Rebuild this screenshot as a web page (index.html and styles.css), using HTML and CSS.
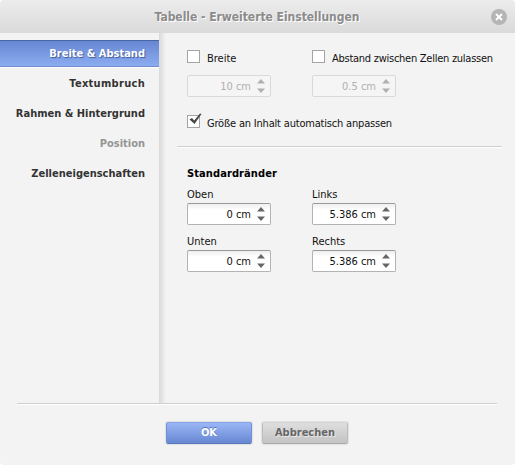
FILE: index.html
```
<!DOCTYPE html>
<html lang="de">
<head>
<meta charset="utf-8">
<title>Tabelle - Erweiterte Einstellungen</title>
<link rel="stylesheet" href="styles.css">
</head>
<body>
<div class="dialog">
  <header class="titlebar">
    <h1>Tabelle - Erweiterte Einstellungen</h1>
    <svg class="close" viewBox="0 0 16 16"><circle cx="8" cy="8" r="8" fill="#b5b5b5"/><path d="M5 5l6 6M11 5l-6 6" stroke="#fff" stroke-width="2"/></svg>
  </header>
  <main class="main">
    <nav class="tabs">
      <a class="tab active">Breite &amp; Abstand</a>
      <a class="tab textwrap">Textumbruch</a>
      <a class="tab">Rahmen &amp; Hintergrund</a>
      <a class="tab disabled">Position</a>
      <a class="tab">Zelleneigenschaften</a>
    </nav>
    <section class="panel">
      <div class="grid options">
        <label class="check"><span class="box"></span><span>Breite</span></label>
        <label class="check"><span class="box"></span><span class="t-spacing">Abstand zwischen Zellen zulassen</span></label>
        <div class="spinner off"><span>10 cm</span><svg viewBox="0 0 8 14"><path d="M0 4.5L4 0l4 4.5zM0 9.5h8L4 14z"/></svg></div>
        <div class="spinner off"><span>0.5 cm</span><svg viewBox="0 0 8 14"><path d="M0 4.5L4 0l4 4.5zM0 9.5h8L4 14z"/></svg></div>
      </div>
      <label class="check auto"><span class="box"><svg class="tick" viewBox="0 0 14 14"><path d="M1.500 6.500l2.500-1.500 2.200 2.500L12 0.500l1.500 0.500L6.500 11z" fill="#484848"/></svg></span><span class="t-auto">Größe an Inhalt automatisch anpassen</span></label>
      <hr class="rule">
      <h2>Standardränder</h2>
      <div class="grid margins">
        <div class="field"><label>Oben</label><div class="spinner"><span>0 cm</span><svg viewBox="0 0 8 14"><path d="M0 4.5L4 0l4 4.5zM0 9.5h8L4 14z"/></svg></div></div>
        <div class="field"><label>Links</label><div class="spinner"><span>5.386 cm</span><svg viewBox="0 0 8 14"><path d="M0 4.5L4 0l4 4.5zM0 9.5h8L4 14z"/></svg></div></div>
        <div class="field"><label>Unten</label><div class="spinner"><span>0 cm</span><svg viewBox="0 0 8 14"><path d="M0 4.5L4 0l4 4.5zM0 9.5h8L4 14z"/></svg></div></div>
        <div class="field"><label>Rechts</label><div class="spinner"><span>5.386 cm</span><svg viewBox="0 0 8 14"><path d="M0 4.5L4 0l4 4.5zM0 9.5h8L4 14z"/></svg></div></div>
      </div>
    </section>
  </main>
  <footer class="footer">
    <button class="btn primary">OK</button>
    <button class="btn">Abbrechen</button>
  </footer>
</div>
</body>
</html>
```

FILE: styles.css
```
* { box-sizing: border-box; }
body { margin: 0; background: #fff; font: 11px/13px "DejaVu Sans Condensed", "DejaVu Sans", sans-serif; color: #111; }
.dialog { width: 515px; height: 465px; display: flex; flex-direction: column; background: #f3f3f3; border-radius: 4px; overflow: hidden; }
.titlebar { height: 33px; flex: none; display: flex; align-items: center; justify-content: flex-end; padding-right: 8px; background: linear-gradient(#ececec, #dadada); }
h1 { margin: 0; flex: 1; padding-left: 23px; text-align: center; font-size: 12px; line-height: 16px; letter-spacing: -0.03px; color: #8b8b8b; text-shadow: 1px 1px 0 #fff; white-space: nowrap; }
.close { width: 16px; height: 16px; }
.main { flex: none; height: 370px; display: flex; }
.tabs { width: 159px; padding-top: 7px; display: flex; flex-direction: column; gap: 3px; }
.tab { height: 27px; padding: 1px 14px 0 0; line-height: 26px; text-align: right; font-weight: bold; color: #333; white-space: nowrap; }
.tab.active { color: #fff; background: linear-gradient(#6686d2, #8cacf1); border-top: 1px solid #4866a5; border-bottom: 1px solid #6e8ccc; box-shadow: 0 1px #fff; text-shadow: 1px 1px 1px #405a9a; padding-top: 0; }
.tab.disabled { color: #959595; }
.tab.textwrap { letter-spacing: 0.3px; }
.panel { flex: 1; padding: 17px 13px 0 28px; background: linear-gradient(90deg, #d9d9d9, #f3f3f3) no-repeat 0 0 / 7px 100%; }
.grid { display: grid; grid-template-columns: 84px 184px; column-gap: 41px; }
.options { row-gap: 12px; }
.check { display: flex; height: 13px; gap: 7px; align-items: center; white-space: nowrap; }
.check > span:last-child { padding-top: 3px; }
.t-spacing { letter-spacing: -0.26px; }
.t-auto { letter-spacing: -0.19px; }
.box { width: 13px; height: 13px; flex: none; border: 1px solid #a4a4a4; background: #fff; position: relative; }
.tick { position: absolute; left: 0; top: -3px; width: 14px; height: 14px; }
.spinner { width: 84px; height: 22px; display: flex; align-items: center; justify-content: flex-end; gap: 6px; padding-right: 5px; border: 1px solid #b3b3b3; border-top-color: #999; border-radius: 2px; background: linear-gradient(#efefef, #fff 6px); }
.spinner svg { width: 8px; height: 14px; fill: #666; }
.spinner.off { background: #f5f5f5; border-color: #d9d9d9; color: #b0b0b0; }
.spinner.off svg { fill: #b0b0b0; }
.auto { margin-top: 18px; }
.rule { margin: 18px 0 0 -10px; border: 0; height: 2px; background: linear-gradient(#cfcfcf 50%, #fff 50%); }
h2 { margin: 19px 0 7px; font-size: 11px; line-height: 14px; letter-spacing: 0.1px; color: #000; }
.margins { row-gap: 10px; }
.field { height: 37px; display: flex; flex-direction: column; justify-content: space-between; }
.footer { flex: none; width: 480px; height: 62px; margin-left: 17px; padding: 18px 0 0 149px; display: flex; gap: 10px; border-top: 1px solid #cfcfcf; box-shadow: inset 0 1px #fff; }
.btn { width: 86px; height: 22px; padding: 0; border: 1px solid #bdbdbd; border-color: #d5d5d5 #bdbdbd #aaa; border-radius: 2px; background: linear-gradient(#dedede, #c3c3c3); box-shadow: 0 0 1px 1px #e2e2e2; font: bold 11px/18px "DejaVu Sans Condensed", sans-serif; color: #666; text-shadow: 1px 1px 0 #e8e8e8; }
.btn.primary { color: #fff; border-color: #86a5e8 #7290d5 #5977bb; background: linear-gradient(#9ab6f5, #6787d2); text-shadow: 0 -1px 0 #5876bc; }
```
